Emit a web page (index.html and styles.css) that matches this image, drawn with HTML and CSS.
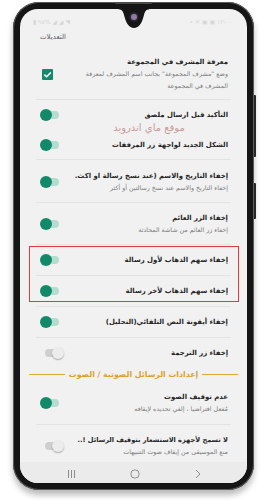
FILE: index.html
```html
<!DOCTYPE html>
<html lang="ar">
<head>
<meta charset="utf-8">
<link rel="stylesheet" href="styles.css">
</head>
<body>
<div class="phone">
  <span class="speaker"></span>
  <span class="sidebtn sb1"></span>
  <span class="sidebtn sb2"></span>
  <svg class="notch" width="36" height="20" viewBox="0 0 36 20">
    <path d="M0 0 C6 0 7 2 8 6 C10 14 13 19 18 19 C23 19 26 14 28 6 C29 2 30 0 36 0 Z" fill="#161616"/>
    <circle cx="18" cy="8" r="4.6" fill="#2b2833"/>
    <circle cx="18" cy="8" r="3" fill="#8e7ca3"/>
  </svg>
  <div class="screen">
    <div class="status">
      <span class="st-left">▮ ٩٨% ◢ ◢ ◥</span>
      <span class="st-right">• ✕ ▣ ▣ ١٢:٠٠</span>
    </div>
    <div class="appbar">التعديلات</div>
    <div class="list" dir="rtl">
      <div class="item i1 noline">
        <div class="text">
          <div class="title">معرفة المشرف في المجموعة</div>
          <div class="sub">وضع "مشرف المجموعة" بجانب اسم المشرف لمعرفة المشرف في المجموعة</div>
        </div>
        <div class="ctrl"><span class="check"><svg width="11" height="11" viewBox="0 0 11 11"><path d="M2.4 5.6 L4.6 7.8 L8.8 3.4" fill="none" stroke="#fff" stroke-width="1.5"/></svg></span></div>
      </div>
      <div class="item one">
        <div class="text"><div class="title">التأكيد قبل ارسال ملصق</div></div>
        <div class="ctrl"><span class="sw on"></span></div>
      </div>
      <div class="item i3 noline">
        <div class="text"><div class="title">الشكل الجديد لواجهة زر المرفقات</div></div>
        <div class="ctrl"><span class="sw on"></span></div>
      </div>
      <div class="item i4">
        <div class="text">
          <div class="title clip">إخفاء التاريخ والاسم (عند نسخ رسالة او اكث.</div>
          <div class="sub">إخفاء التاريخ والاسم عند نسخ رسالتين أو أكثر</div>
        </div>
        <div class="ctrl"><span class="sw on"></span></div>
      </div>
      <div class="item i5">
        <div class="text">
          <div class="title">إخفاء الزر العائم</div>
          <div class="sub">إخفاء زر العائم من شاشة المحادثة</div>
        </div>
        <div class="ctrl"><span class="sw on"></span></div>
      </div>
      <div class="item one">
        <div class="text"><div class="title">إخفاء سهم الذهاب لأول رسالة</div></div>
        <div class="ctrl"><span class="sw on"></span></div>
      </div>
      <div class="item one">
        <div class="text"><div class="title">إخفاء سهم الذهاب لأخر رسالة</div></div>
        <div class="ctrl"><span class="sw on"></span></div>
      </div>
      <div class="item one">
        <div class="text"><div class="title">إخفاء أيقونة النص التلقائي(التحليل)</div></div>
        <div class="ctrl"><span class="sw on"></span></div>
      </div>
      <div class="item one">
        <div class="text"><div class="title">إخفاء زر الترجمة</div></div>
        <div class="ctrl"><span class="sw off"></span></div>
      </div>
      <div class="section">
        <span class="line"></span>
        <span class="sec-title">إعدادات الرسائل الصوتية / الصوت</span>
        <span class="line"></span>
      </div>
      <div class="item i11 noline">
        <div class="text">
          <div class="title">عدم توقيف الصوت</div>
          <div class="sub">مُفعل افتراضيا ، إلغي تحديده لإيقافه</div>
        </div>
        <div class="ctrl"><span class="sw on"></span></div>
      </div>
      <div class="item i12">
        <div class="text">
          <div class="title">لا تسمح لأجهزة الاستشعار بتوقيف الرسائل !..</div>
          <div class="sub">منع الموسيقى من إيقاف صوت التنبيهات</div>
        </div>
        <div class="ctrl"><span class="sw off"></span></div>
      </div>
    </div>
    <div class="navbar">
      <svg width="9" height="10" viewBox="0 0 9 10"><path d="M1.5 1 V9 M4.5 1 V9 M7.5 1 V9" stroke="#8c8c8c" stroke-width="1"/></svg>
      <svg width="10" height="10" viewBox="0 0 10 10"><rect x="1" y="1" width="8" height="8" rx="3.4" fill="none" stroke="#8c8c8c" stroke-width="1"/></svg>
      <svg width="8" height="10" viewBox="0 0 8 10"><path d="M2 1 L6 5 L2 9" fill="none" stroke="#8c8c8c" stroke-width="1"/></svg>
    </div>
    <div class="watermark">موقع ماي اندرويد</div>
    <div class="highlight"></div>
  </div>
</div>
</body>
</html>
```
FILE: styles.css
```css
html, body {
  margin: 0;
  padding: 0;
  background: #ffffff;
}
body {
  font-family: "DejaVu Sans", "Noto Sans", sans-serif;
  width: 269px;
  height: 500px;
  overflow: hidden;
}
.phone {
  position: relative;
  width: 241px;
  height: 488px;
  margin: 2px 0 0 13px;
  box-sizing: border-box;
  padding: 7px;
  border-radius: 26px;
  background: #151515;
  box-shadow: inset 0 0 0 1px #5a5a5a, 0 5px 6px rgba(0, 0, 0, 0.28);
}
.speaker {
  position: absolute;
  left: 102px;
  top: 0;
  width: 37px;
  height: 2px;
  border-radius: 1px;
  background: #4a4a4a;
}
.sidebtn {
  position: absolute;
  right: -2px;
  width: 2px;
  background: #262626;
  border-radius: 0 1px 1px 0;
}
.sb1 { top: 93px; height: 62px; }
.sb2 { top: 181px; height: 36px; }
.notch {
  position: absolute;
  left: 103px;
  top: 7px;
  z-index: 3;
}
.screen {
  position: relative;
  height: 100%;
  border-radius: 18px;
  background: #f1f1f1;
  overflow: hidden;
  display: flex;
  flex-direction: column;
}
.status {
  height: 20px;
  flex: none;
  display: flex;
  justify-content: space-between;
  align-items: center;
  padding: 2px 15px 0 13px;
  font-size: 6px;
  color: #d6d6d6;
}
.appbar {
  height: 15px;
  flex: none;
  padding-left: 20px;
  font-size: 7px;
  line-height: 12px;
  color: #5c5c5c;
}
.list {
  flex: 1;
  display: flex;
  flex-direction: column;
}
.item {
  display: flex;
  align-items: center;
  margin: 0 16px;
  border-top: 1px solid #e3e3e3;
  box-sizing: border-box;
  flex: none;
}
.item.noline { border-top: 0; }
.item.one { height: 31px; }
.i1 { height: 53px; padding-top: 3px; }
.i3 { height: 29px; }
.i4 { height: 43px; padding-top: 1px; }
.i5 { height: 42px; }
.i11 { height: 44px; padding-top: 2px; }
.i12 { height: 38px; padding-top: 5px; }
.text {
  flex: 1;
  min-width: 0;
  padding-right: 3px;
  text-align: right;
}
.title {
  font-size: 6.9px;
  font-weight: bold;
  line-height: 12px;
  color: #262626;
  white-space: nowrap;
  overflow: hidden;
}
.i12 .title { font-size: 6.6px; }
.sub {
  font-size: 6.3px;
  line-height: 12px;
  color: #7b7b7b;
}
.ctrl {
  width: 39px;
  flex: none;
  direction: ltr;
  display: flex;
  align-items: center;
  padding-left: 4px;
  box-sizing: border-box;
}
.check {
  display: block;
  width: 11px;
  height: 11px;
  margin-left: 2px;
  background: #138a6b;
  border-radius: 1px;
}
.check svg { display: block; }
.sw {
  position: relative;
  display: block;
  width: 24px;
  height: 12px;
}
.sw::before {
  content: "";
  position: absolute;
  top: 2px;
  height: 8px;
  border-radius: 4px;
}
.sw::after {
  content: "";
  position: absolute;
  top: 0;
  width: 12px;
  height: 12px;
  border-radius: 50%;
}
.sw.on::before { left: 2px; width: 17px; background: #b4ddd1; }
.sw.on::after { left: 0; background: #128a6a; }
.sw.off::before { left: 5px; width: 16px; background: #cfcfcf; }
.sw.off::after {
  left: 12px;
  background: #ececec;
  box-shadow: 0 1px 1.5px rgba(0, 0, 0, 0.3);
}
.section {
  height: 12px;
  flex: none;
  margin: 0 9px;
  display: flex;
  align-items: center;
  gap: 4px;
  direction: ltr;
}
.section .line {
  flex: 1;
  height: 1px;
  background: #ddaa33;
}
.sec-title {
  font-size: 7.8px;
  font-weight: bold;
  color: #d9a22a;
  white-space: nowrap;
  direction: rtl;
}
.navbar {
  height: 23px;
  flex: none;
  background: #ebebeb;
  display: flex;
  align-items: center;
  justify-content: center;
  gap: 54px;
  padding-left: 2px;
}
.navbar svg { display: block; }
.watermark {
  position: absolute;
  left: 85px;
  top: 112px;
  width: 88px;
  line-height: 14px;
  text-align: center;
  white-space: nowrap;
  font-size: 10px;
  color: #c99b9b;
  z-index: 2;
}
.highlight {
  position: absolute;
  left: 9px;
  top: 237px;
  width: 210px;
  height: 56px;
  box-sizing: border-box;
  border: 1.5px solid #e0393b;
  z-index: 2;
}
```
